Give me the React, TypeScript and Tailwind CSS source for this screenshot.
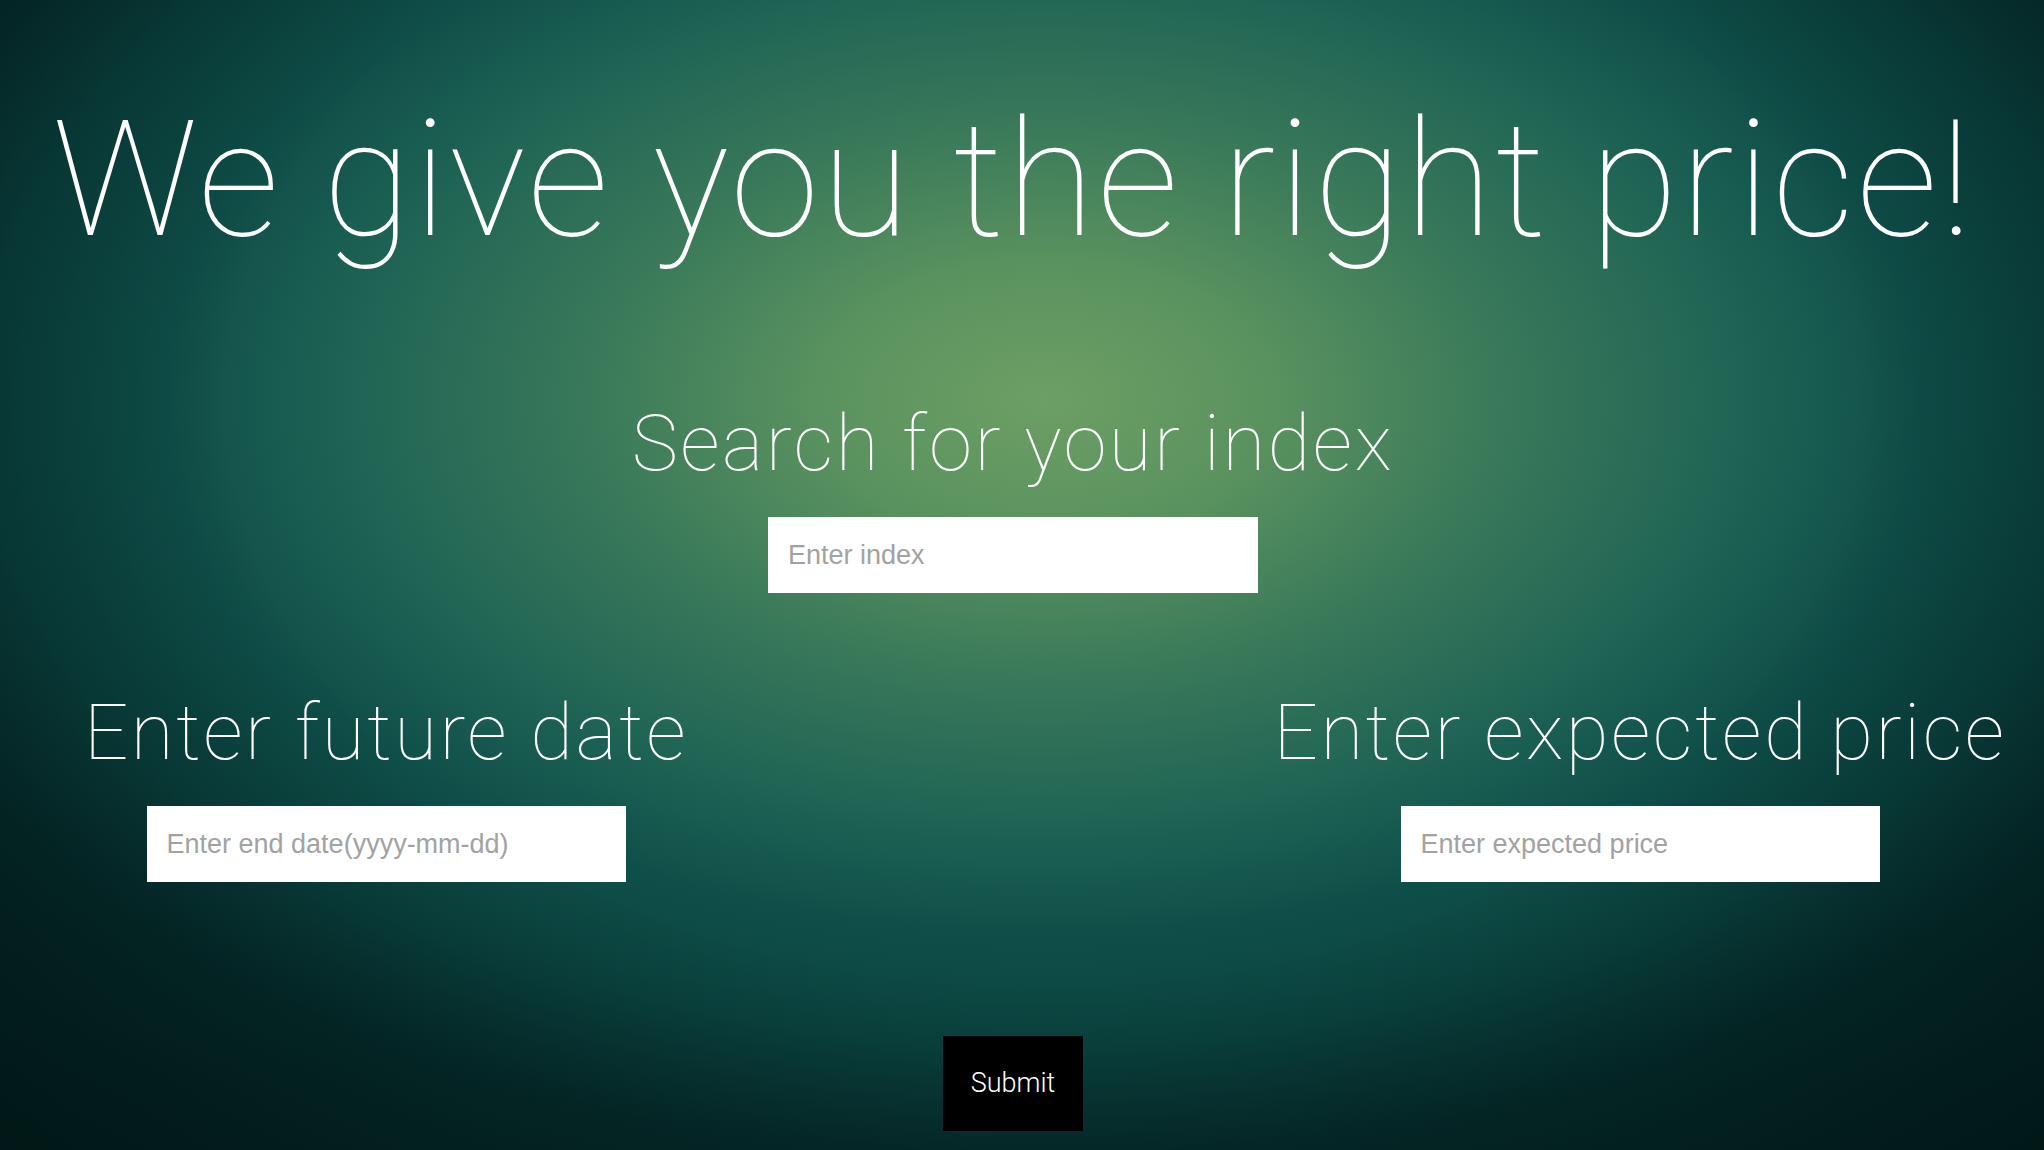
import React from "react";

const THIN = "font-['Roboto','Liberation_Sans',sans-serif] font-thin";

function Field({ placeholder, wide }: { placeholder: string; wide?: boolean }) {
  return (
    <input
      type="text"
      placeholder={placeholder}
      className={`block h-[76px] ${wide ? "w-[490px]" : "w-[479px]"} bg-white px-5 font-['Liberation_Sans',Arial,sans-serif] text-[27px] text-[#555] outline-none placeholder:text-[#a2a2a2]`}
    />
  );
}

export default function App() {
  return (
    <div className="min-h-screen w-full overflow-hidden bg-[radial-gradient(ellipse_farthest-corner_at_51%_35%,transparent_55%,rgba(1,22,22,0.75)_100%),radial-gradient(1250px_760px_at_1045px_400px,#6c9f64_0%,#5a925f_18%,#3a7a5a_36%,#1f6455_55%,#0f4f49_70%,#0a433f_85%,#052c2b_100%,#021b1b_130%)] text-white">
      <div className="flex flex-col items-center pr-[18px]">
        <h1 className={`${THIN} mt-[100px] whitespace-nowrap text-[161px] leading-none tracking-[2.5px]`}>
          We give you the right price!
        </h1>

        <h2 className={`${THIN} mt-[144px] text-[78px] leading-none tracking-[2.5px]`}>
          Search for your index
        </h2>
        <div className="mt-[34px]">
          <Field placeholder="Enter index" wide />
        </div>

        <div className="mt-[101px] flex w-full justify-between">
          <div className="flex w-[772px] flex-col items-center">
            <h2 className={`${THIN} text-[78px] leading-none tracking-[2.5px]`}>Enter future date</h2>
            <div className="mt-[34px]">
              <Field placeholder="Enter end date(yyyy-mm-dd)" />
            </div>
          </div>
          <div className="flex w-[772px] flex-col items-center">
            <h2 className={`${THIN} text-[78px] leading-none tracking-[2.5px]`}>Enter expected price</h2>
            <div className="mt-[34px]">
              <Field placeholder="Enter expected price" />
            </div>
          </div>
        </div>

        <button
          type="button"
          className="mt-[154px] h-[95px] w-[140px] bg-black font-['Roboto',sans-serif] text-[27px] font-light text-white"
        >
          Submit
        </button>
      </div>
    </div>
  );
}
